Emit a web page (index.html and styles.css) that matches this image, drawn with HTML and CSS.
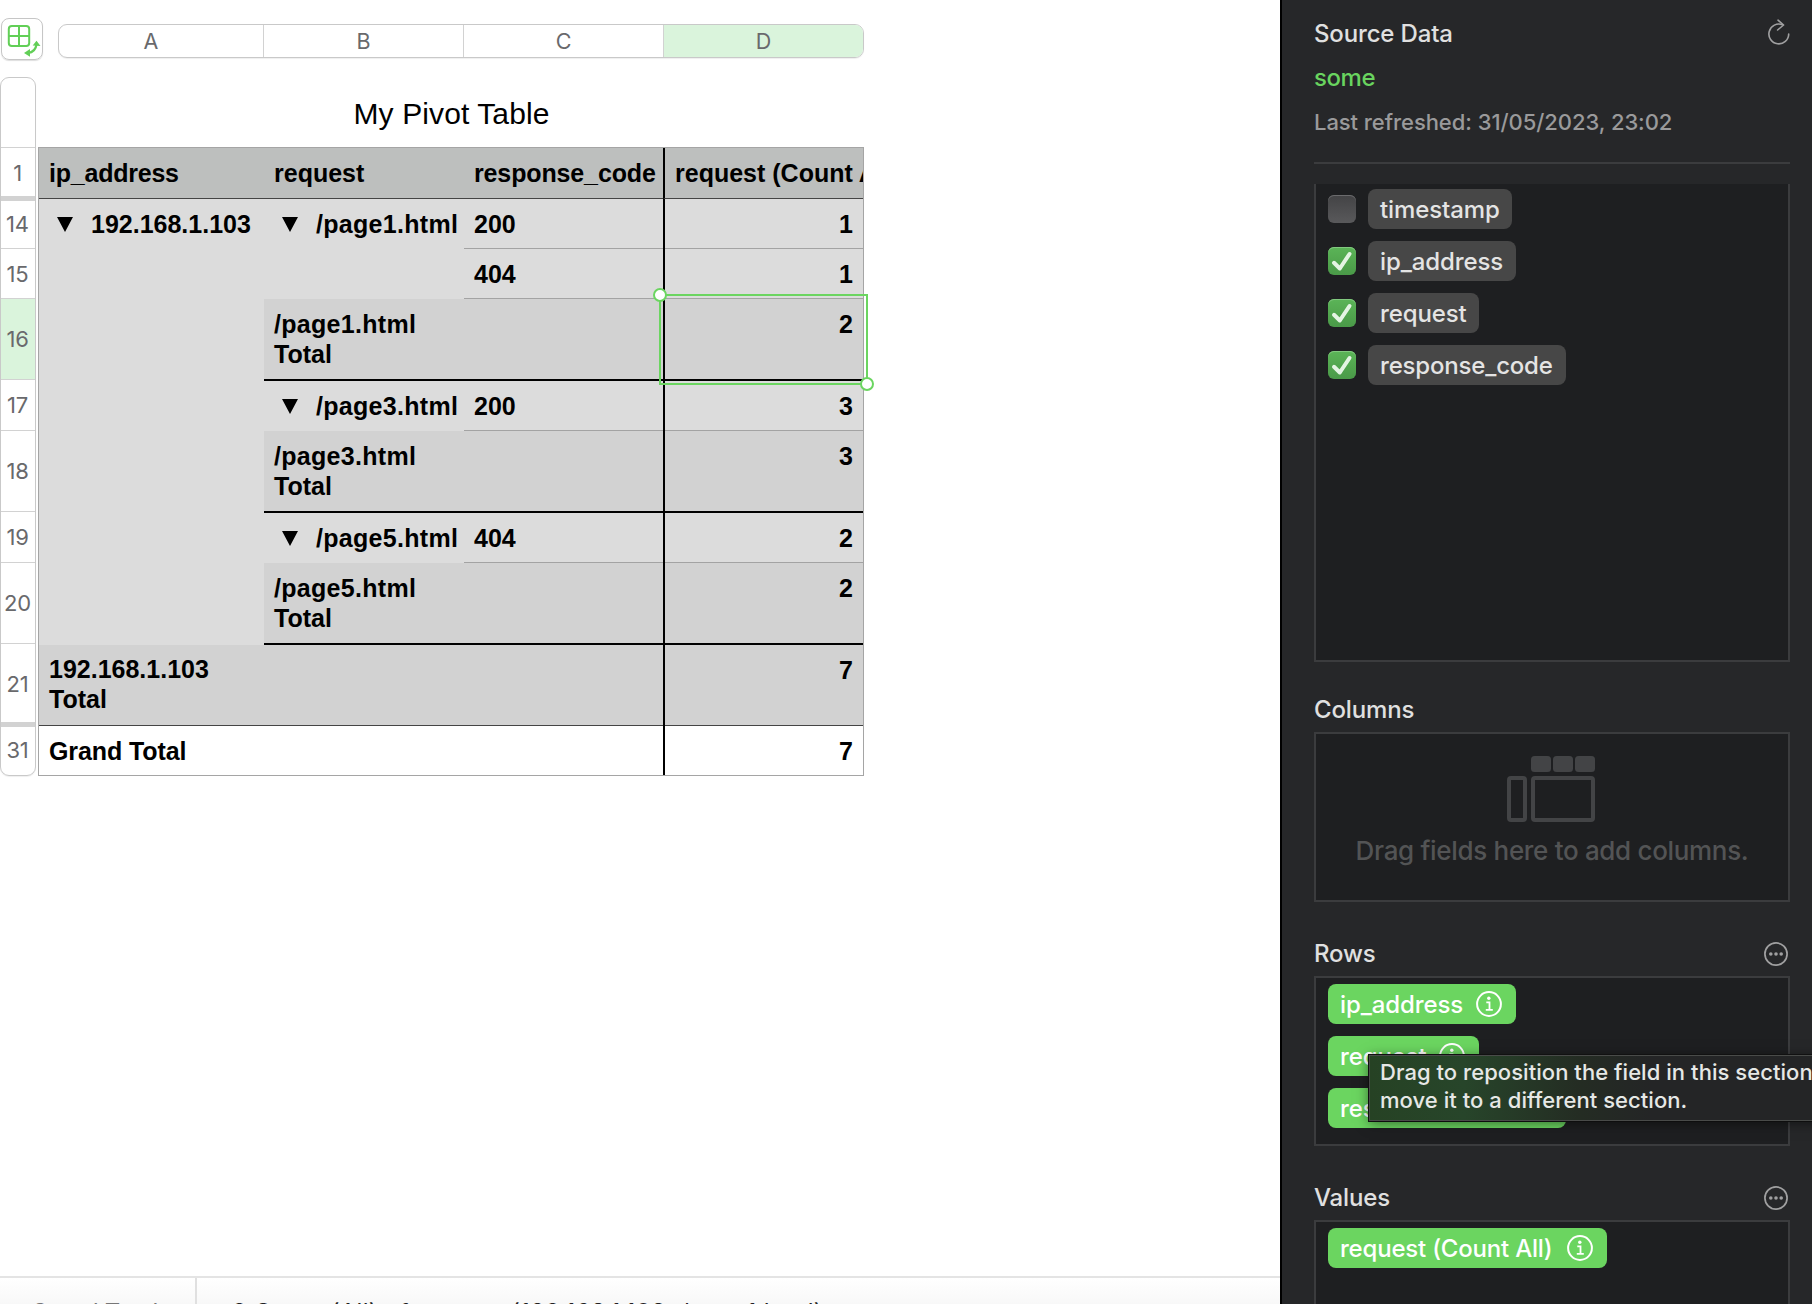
FILE: index.html
```html
<!DOCTYPE html>
<html lang="en">
<head>
<meta charset="utf-8">
<title>My Pivot Table</title>
<link rel="stylesheet" href="styles.css">
</head>
<body>
<svg class="defs" width="0" height="0" aria-hidden="true">
  <symbol id="info" viewBox="0 0 26 26"><circle cx="13" cy="13" r="11.9" fill="none" stroke="#fff" stroke-width="2"/><circle cx="12.8" cy="7.2" r="1.7" fill="#fff"/><path d="M10.3 11.3h3.2v7.4M9.8 18.8h7" fill="none" stroke="#fff" stroke-width="1.8"/></symbol>
  <symbol id="more" viewBox="0 0 24 24"><circle cx="12" cy="12" r="11.1" fill="none" stroke="#a0a0a1" stroke-width="1.7"/><g fill="#a0a0a1"><circle cx="6.8" cy="12" r="1.8"/><circle cx="12" cy="12" r="1.8"/><circle cx="17.2" cy="12" r="1.8"/></g></symbol>
  <symbol id="check" viewBox="0 0 28 28"><path d="M6 15.800l5.800 5.700L21.500 7" fill="none" stroke="#e4f4e3" stroke-width="4" stroke-linecap="round" stroke-linejoin="round"/></symbol>
</svg>
<div class="app">
  <main class="sheet">
    <div class="top">
      <div class="pivot-button">
        <svg width="42" height="42" viewBox="0 0 42 42"><g fill="none" stroke="#62cf57" stroke-width="2"><rect x="7.8" y="8" width="20.4" height="20" rx="3"/><path d="M18 8v20M8 18h20"/><path d="M27 35q7.500-1 8.500-8.500" stroke-width="2.200"/></g><path d="M35.500 22.800l4 5.200-7.800-.4zM23 35l6-4v7.800z" fill="#62cf57"/></svg>
      </div>
      <div class="col-heads"><span>A</span><span>B</span><span>C</span><span class="on">D</span></div>
    </div>
    <div class="body">
      <div class="row-heads">
        <span></span><span>1</span><span class="gap">14</span><span>15</span><span class="on">16</span><span>17</span><span>18</span><span>19</span><span>20</span><span>21</span><span class="gap">31</span>
      </div>
      <div class="table-wrap">
        <h1 class="title">My Pivot Table</h1>
        <div class="grid">
          <div class="c head"><b class="t1">ip_address</b></div><div class="c head"><b class="t2">request</b></div><div class="c head"><b class="t3">response_code</b></div><div class="c head v"><b class="t4">request (Count All)</b></div>
          <div class="c span7"><i></i><b class="ip">192.168.1.103</b></div>
          <div class="c span2"><i></i><b class="page">/page1.html</b></div><div class="c thin">200</div><div class="c thin v n">1</div>
          <div class="c thin">404</div><div class="c thin v n">1</div>
          <div class="c sub"><b class="page">/page1.html</b><br><b>Total</b></div><div class="c sub"></div><div class="c sub v n sel">2<span class="selection"></span></div>
          <div class="c"><i></i><b class="page">/page3.html</b></div><div class="c thin">200</div><div class="c thin v n">3</div>
          <div class="c sub"><b class="page">/page3.html</b><br><b>Total</b></div><div class="c sub"></div><div class="c sub v n">3</div>
          <div class="c"><i></i><b class="page">/page5.html</b></div><div class="c thin">404</div><div class="c thin v n">2</div>
          <div class="c sub"><b class="page">/page5.html</b><br><b>Total</b></div><div class="c sub"></div><div class="c sub v n">2</div>
          <div class="c tot wide"><b class="ip">192.168.1.103<br>Total</b></div><div class="c tot v n">7</div>
          <div class="c grand wide"><b class="t5">Grand Total</b></div><div class="c grand v n">7</div>
        </div>
      </div>
    </div>
    <footer class="status"><span class="s1">Grand Total</span><span class="s2">2 Count (All) of request (192.168.1.103, /page1.html)</span></footer>
  </main>
  <aside class="panel">
    <header class="source">
      <div class="line"><h2>Source Data</h2><svg class="refresh" width="22" height="26" viewBox="0 0 22 26"><g fill="none" stroke="#a0a0a1" stroke-width="1.600" stroke-linecap="round" stroke-linejoin="round"><path d="M20.700 15A9.900 9.900 0 1 1 14.500 5.800"/><path d="M10 1.200l5.600 4.800-6 5"/></g></svg></div>
      <a class="name">some</a>
      <p class="date">Last refreshed: 31/05/2023, 23:02</p>
    </header>
    <section class="box fields">
      <label><span class="cb"></span><span class="chip f1">timestamp</span></label>
      <label><svg class="cb on"><use href="#check"/></svg><span class="chip f2">ip_address</span></label>
      <label><svg class="cb on"><use href="#check"/></svg><span class="chip f3">request</span></label>
      <label><svg class="cb on"><use href="#check"/></svg><span class="chip f4">response_code</span></label>
    </section>
    <div class="line sec first"><h2>Columns</h2></div>
    <section class="box drop">
      <svg width="88" height="66" viewBox="0 0 88 66"><g fill="#434446"><rect x="24" width="20" height="16" rx="3.500"/><rect x="46" width="20" height="16" rx="3.500"/><rect x="68" width="20" height="16" rx="3.500"/></g><g fill="none" stroke="#434446" stroke-width="4"><rect x="2" y="22" width="16" height="42" rx="2"/><rect x="26" y="22" width="60" height="42" rx="2"/></g></svg>
      <p>Drag fields here to add columns.</p>
    </section>
    <div class="line sec"><h2>Rows</h2><svg class="more"><use href="#more"/></svg></div>
    <section class="box rows">
      <span class="chip green g1"><em>ip_address</em><svg><use href="#info"/></svg></span>
      <span class="chip green g2"><em>request</em><svg><use href="#info"/></svg></span>
      <span class="chip green g3"><em>response_code</em><svg><use href="#info"/></svg></span>
      <div class="tooltip">Drag to reposition the field in this section or<br>move it to a different section.</div>
    </section>
    <div class="line sec"><h2>Values</h2><svg class="more"><use href="#more"/></svg></div>
    <section class="box values">
      <span class="chip green g4"><em>request (Count All)</em><svg><use href="#info"/></svg></span>
    </section>
  </aside>
</div>
</body>
</html>
```
FILE: styles.css
```css
*, *::before, *::after { box-sizing: border-box; }
body { margin: 0; font-family: Inter, "Liberation Sans", sans-serif; overflow: hidden; }
h1, h2, p { margin: 0; font-weight: inherit; }
.defs { display: block; position: absolute; }
.app { display: flex; width: 1812px; height: 1304px; overflow: hidden; }
.sheet { width: 1280px; flex: none; display: flex; flex-direction: column; background: #fff; }

/* spreadsheet headers */
.top { display: flex; align-items: flex-start; height: 77px; padding: 18px 0 0 1px; }
.pivot-button { width: 42px; height: 42px; border: 1px solid #c6c6c6; border-radius: 8px; box-shadow: 0 1px 1px #0002; }
.pivot-button svg { display: block; margin: -1px; }
.col-heads { display: grid; grid-template-columns: 205px 200px 200px 199px; margin: 6px 0 0 15px; height: 34px; border: 1px solid #c9c9c9; border-radius: 9px; box-shadow: 0 1px 1px #0001; overflow: hidden; }
.col-heads span { display: flex; align-items: center; justify-content: center; border-right: 1px solid #d2d2d2; font-size: 21.500px; color: #69696c; }
.col-heads span:first-child { padding-right: 20px; }
.col-heads span:last-child { border-right: 0; }
.on { background: #daf4dc; }
.body { display: flex; height: 699px; }
.row-heads { width: 36px; display: grid; grid-template-rows: 70px 51px 50px 50px 81px 51px 81px 51px 81px 81px 50px; border: 1px solid #c9c9c9; border-radius: 9px; box-shadow: 0 1px 1px #0001; overflow: hidden; }
.row-heads span { display: flex; align-items: center; justify-content: center; padding-right: 1px; border-bottom: 1px solid #d2d2d2; font-size: 22px; color: #69696c; letter-spacing: -.2px; }
.row-heads span:last-child { border-bottom: 0; padding-bottom: 1px; }
.row-heads .gap { box-shadow: 0 -3px #d2d2d2, inset 0 2px #d2d2d2; }

/* pivot table */
.table-wrap { margin-left: 2px; width: 826px; font-family: "Liberation Sans", Arial, sans-serif; }
.title { height: 70px; padding: 19px 0 0 1px; line-height: 35px; font-size: 30px; font-weight: 400; text-align: center; letter-spacing: .1px; }
.grid { display: grid; grid-template-columns: 225px 200px 199px 200px; grid-template-rows: 51px 50px 50px 82px 50px 82px 50px 82px 81px 49px; border: 1px solid #a5a5a5; background: #dcdcdc; font-size: 25px; line-height: 30px; font-weight: 700; color: #000; }
.c { padding: 10px 10px 0; white-space: nowrap; min-width: 0; border: 0 solid #a3a3a3; }
.c b { display: inline-block; }
.c .page { letter-spacing: .3px; }
.c .t1 { letter-spacing: -.22px; }
.c .t3 { letter-spacing: -.13px; }
.c .t5 { letter-spacing: -.1px; }
.c.v { border-left: 2px solid #000; }
.head { background: #bdbfbe; border-bottom: 1px solid #444; }
.head.v { overflow: hidden; border-bottom-color: #444; }
.thin { box-shadow: inset 0 -1px #a3a3a3; }
.sub { background: #d2d2d2; box-shadow: inset 0 -2px #000; }
.tot { background: #d2d2d2; box-shadow: inset 0 -1px #444; }
.tot.wide { padding-top: 9px; }
.grand { background: #fff; }
.n { text-align: right; }
.span7 { grid-row: span 7; }
.span2 { grid-row: span 2; }
.wide { grid-column: span 3; }
.c i { display: inline-block; margin: 0 18px 1px 8px; border: solid transparent; border-width: 15px 8.500px 0; border-top-color: #000; }
.sel { position: relative; }
.selection { position: absolute; left: -6px; top: -5px; width: 209px; height: 91px; border: 2px solid #6bd560; }
.selection::before, .selection::after { content: ""; position: absolute; width: 14px; height: 14px; border: 2px solid #6bd560; border-radius: 50%; background: #fff; }
.selection::before { left: -8px; top: -8px; }
.selection::after { right: -8px; bottom: -8px; }

/* bottom bar */
.status { margin-top: auto; height: 28px; display: flex; border-top: 2px solid #e4e4e4; background: linear-gradient(#fff, #f8f8f8); font-size: 24px; line-height: 28px; white-space: nowrap; overflow: hidden; }
.status span { padding-top: 21px; }
.s1 { width: 197px; padding-left: 31px; border-right: 2px solid #e0e0e0; letter-spacing: -.4px; color: #777; }
.s2 { padding-left: 35px; letter-spacing: .3px; color: #222; }

/* inspector */
.panel { flex: 1; min-width: 0; padding: 0 22px 0 32px; border-left: 2px solid #000; background: #262729; color: #e0e0e0; font-size: 24px; font-weight: 450; }
.panel h2 { font-size: 24px; line-height: 30px; letter-spacing: -.15px; }
.line { display: flex; justify-content: space-between; }
.source { height: 164px; padding-top: 19px; border-bottom: 2px solid #3b3c3e; }
.name { display: block; margin-top: 14px; line-height: 30px; letter-spacing: -.4px; color: #69d45f; }
.date { margin-top: 15px; font-size: 22px; line-height: 28px; letter-spacing: -.06px; color: #9a9a9b; white-space: nowrap; }
.box { border: 2px solid #3b3c3e; background: #1e1f21; padding: 6px 12px; }
.fields { margin-top: 20px; height: 478px; border-top: 0; padding-top: 5px; }
.fields label { display: flex; align-items: center; gap: 12px; height: 40px; margin-bottom: 12px; }
.cb { width: 28px; height: 28px; border-radius: 6px; background: linear-gradient(#434345, #59595b); box-shadow: inset 0 1px #6b6b6d; }
.cb.on { background: linear-gradient(#5bb457, #4a9a48); box-shadow: inset 0 1px #82c97f; }
.chip { display: flex; align-items: center; height: 40px; padding: 0 12px; border-radius: 8px; background: #474747; color: #e4e4e4; letter-spacing: -.1px; white-space: nowrap; }
.chip em { font-style: normal; }
.f1 { width: 144px; }
.f2 { width: 148px; }
.f3 { width: 111px; }
.f4 { width: 198px; letter-spacing: -.18px; }
.sec { height: 74px; padding-top: 37px; }
.sec.first { height: 70px; padding-top: 33px; }
.more { width: 24px; height: 24px; margin: 3px 2px 0 0; }
.drop { height: 170px; padding: 22px 0 0; text-align: center; color: #535455; }
.drop svg { display: block; margin: 0 auto 0 191px; }
.drop p { margin-top: 13px; font-size: 26px; line-height: 32px; letter-spacing: -.32px; white-space: nowrap; }
.rows { position: relative; height: 170px; }
.green { margin-bottom: 12px; background: #6bd560; color: #fff; justify-content: space-between; padding-right: 14px; }
.green svg { width: 26px; height: 26px; }
.g1 { width: 188px; }
.g2 { width: 151px; }
.g3 { width: 238px; }
.g4 { width: 279px; letter-spacing: -.2px; }
.values { height: 120px; }
.tooltip { position: absolute; left: 53px; top: 77px; width: 470px; height: 66px; padding: 2px 10px; border: 1px solid #494b49; background: linear-gradient(90deg, #264224, #27452a 20%, #242c23 45%, #242526 60%); box-shadow: 0 2px 12px #0008, 0 0 0 1px #151515; font-size: 22px; line-height: 28px; letter-spacing: .05px; color: #e6e8e6; white-space: nowrap; }
```
